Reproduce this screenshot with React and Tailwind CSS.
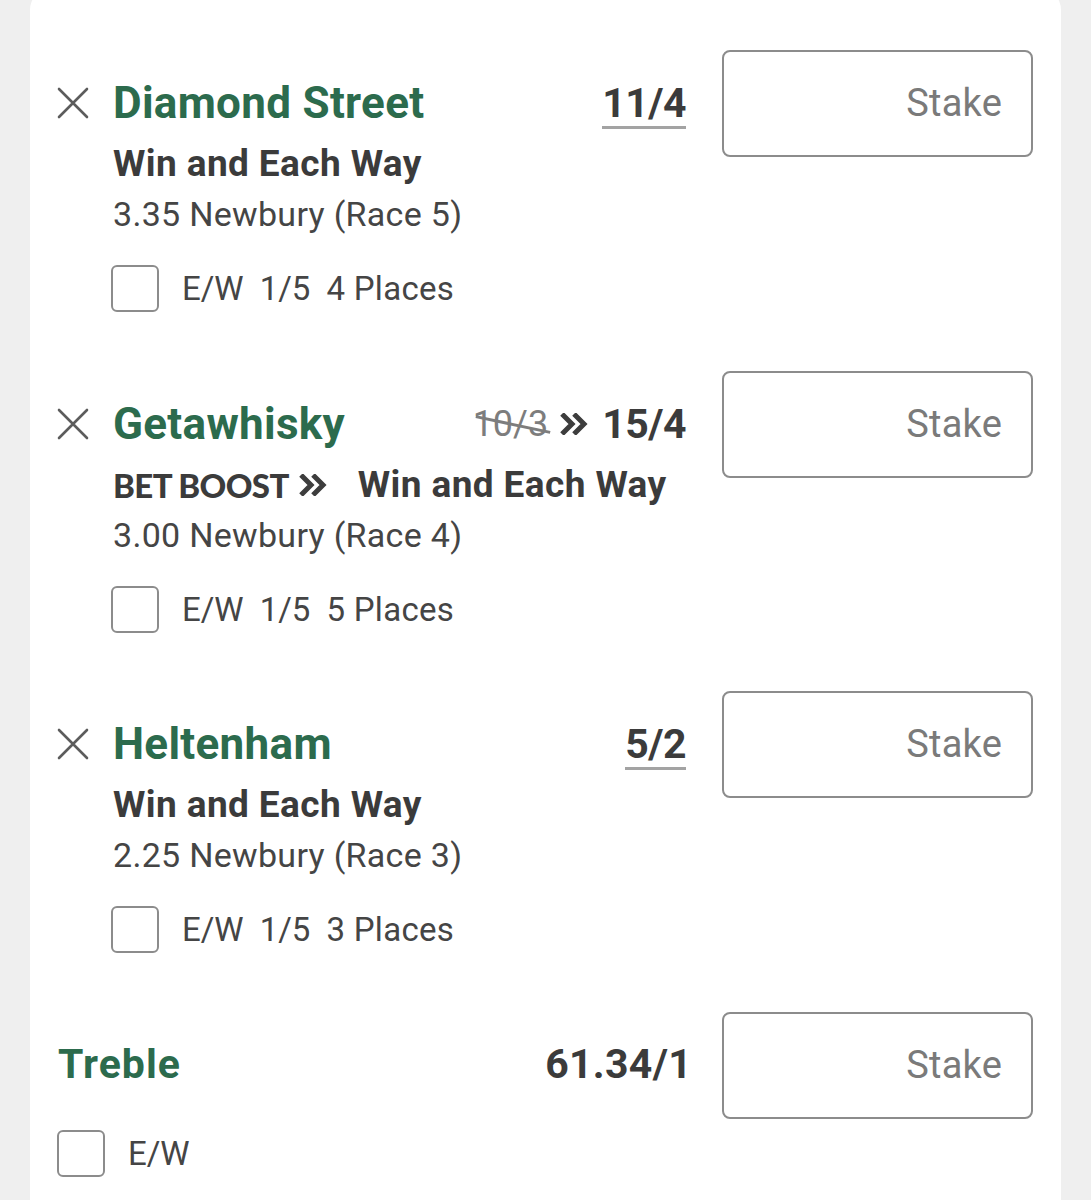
import React from "react";

const FONT = { fontFamily: "Roboto, 'Liberation Sans', sans-serif" };

function XIcon() {
  return (
    <svg width="32" height="32" viewBox="0 0 32 32" className="block">
      <path d="M2 2 L30 30 M30 2 L2 30" stroke="#5c5c5c" strokeWidth="2.6" strokeLinecap="round" fill="none" />
    </svg>
  );
}

function Chevrons({ w = 28, h = 22, color = "#3d3d3d" }) {
  return (
    <svg width={w} height={h} viewBox="0 0 28 22" className="block">
      <path d="M2 1 L12 11 L2 21 M14 1 L24 11 L14 21" stroke={color} strokeWidth="5" fill="none" strokeLinejoin="miter" />
    </svg>
  );
}

function Checkbox() {
  return <div className="w-[48px] h-[47px] rounded-[6px] border-2 border-[#8c8c8c] bg-white shrink-0" />;
}

function StakeInput() {
  return (
    <div className="ml-[36px] w-[311px] h-[107px] shrink-0 rounded-[8px] border-2 border-[#8c8c8c] flex items-center justify-end pr-[29px]">
      <span className="text-[38px] text-[#7a7a7a] tracking-[0.2px]">Stake</span>
    </div>
  );
}

function Odds({ value }) {
  return (
    <div className="flex flex-col items-center">
      <span className="text-[41px] leading-[50px] font-bold text-[#3b3b3b] tracking-[-0.5px]">{value}</span>
      <span className="block h-[3px] w-full bg-[#a3a3a3] -mt-[2px]" />
    </div>
  );
}

function BoostOdds() {
  return (
    <div className="flex items-center">
      <span className="relative text-[36px] leading-[50px] text-[#7d7d7d]">
        10/3
        <span className="absolute left-[2px] top-[24px] w-[76px] h-[3px] bg-[#7d7d7d] rotate-[12deg]" />
      </span>
      <span className="ml-[12px] mr-[14px]">
        <Chevrons w={28} h={22} />
      </span>
      <span className="text-[41px] leading-[50px] font-bold text-[#3b3b3b] tracking-[-0.5px]">15/4</span>
    </div>
  );
}

function BetRow({ name, odds, boost, race, places }) {
  return (
    <div className="flex items-start">
      <div className="flex-1 min-w-0">
        <div className="mt-[28px] h-[50px] flex items-center">
          <div className="w-[56px] shrink-0 flex items-center">
            <XIcon />
          </div>
          <span className="text-[44px] leading-[50px] font-bold text-[#2c6b4d] tracking-[0.3px]">{name}</span>
          <div className="flex-1" />
          {boost ? <BoostOdds /> : <Odds value={odds} />}
        </div>
        <div className="pl-[56px] mt-[14px] h-[44px] flex items-center">
          {boost && (
            <div className="flex items-center mr-[31px]">
              <span
                className="text-[33px] leading-[44px] font-black text-[#3b3b3b] tracking-[-0.6px]"
                style={{ fontFamily: "Lato, 'Open Sans', sans-serif" }}
              >
                BET BOOST
              </span>
              <span className="ml-[10px]">
                <Chevrons w={28} h={22} />
              </span>
            </div>
          )}
          <span className="text-[37px] leading-[44px] font-bold text-[#3b3b3b] tracking-[0.4px]">Win and Each Way</span>
        </div>
        <div className="pl-[56px] mt-[6px] text-[34px] leading-[44px] text-[#454545] tracking-[0.3px]">{race}</div>
        <div className="pl-[54px] mt-[28px] flex items-center">
          <Checkbox />
          <span className="ml-[23px] text-[33px] text-[#454545]">E/W</span>
          <span className="ml-[16px] text-[33px] text-[#454545]">1/5</span>
          <span className="ml-[16px] text-[33px] text-[#454545] tracking-[0.3px]">{places}</span>
        </div>
      </div>
      <StakeInput />
    </div>
  );
}

export default function App() {
  return (
    <div className="min-h-[1200px] bg-[#efefef] px-[30px] overflow-hidden" style={FONT}>
      <div className="bg-white rounded-t-[22px] -mt-[12px] pt-[62px] pl-[27px] pr-[28px] pb-[40px] min-h-[1260px]">
        <div className="flex flex-col gap-[57px]">
          <BetRow name="Diamond Street" odds="11/4" race="3.35 Newbury (Race 5)" places="4 Places" />
          <BetRow name="Getawhisky" boost race="3.00 Newbury (Race 4)" places="5 Places" />
          <BetRow name="Heltenham" odds="5/2" race="2.25 Newbury (Race 3)" places="3 Places" />
          <div className="flex items-start">
            <div className="flex-1 min-w-0">
              <div className="h-[107px] flex items-center -mr-[6px]">
                <span className="pl-[1px] text-[41px] font-bold text-[#2c6b4d] tracking-[1px]">Treble</span>
                <div className="flex-1" />
                <span className="text-[41px] font-bold text-[#3b3b3b] tracking-[0.3px]">61.34/1</span>
              </div>
              <div className="mt-[10px] flex items-center">
                <Checkbox />
                <span className="ml-[23px] text-[33px] text-[#454545]">E/W</span>
              </div>
            </div>
            <StakeInput />
          </div>
        </div>
      </div>
    </div>
  );
}
